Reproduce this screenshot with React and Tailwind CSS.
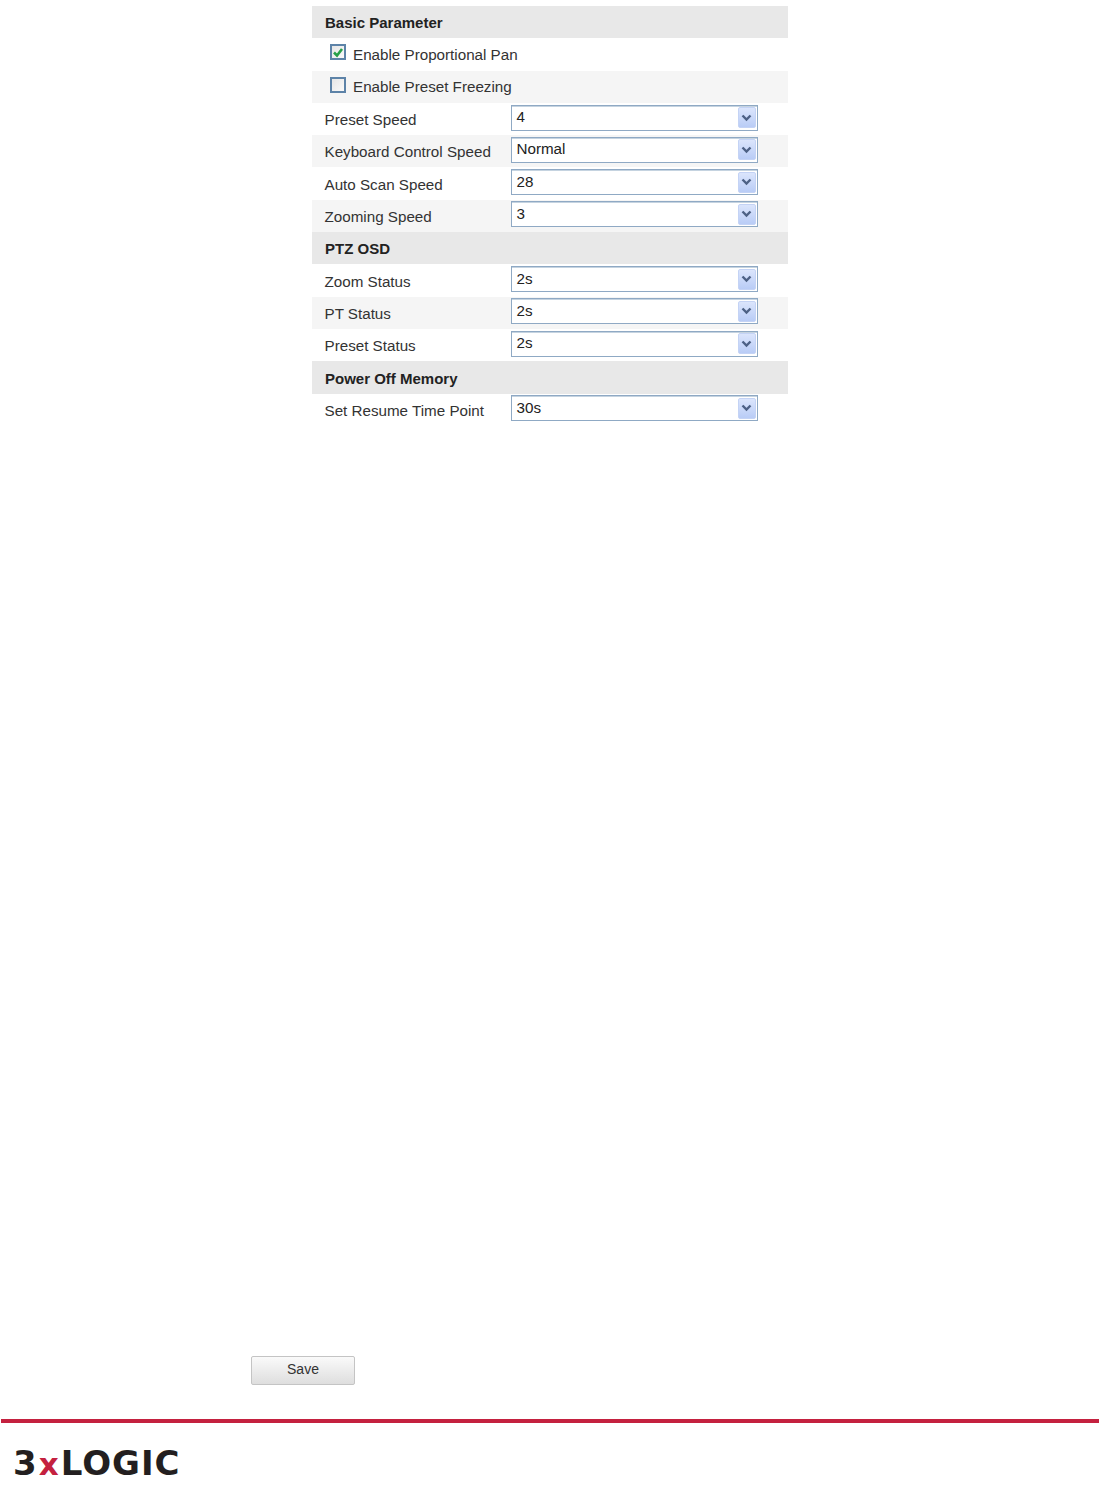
import React from "react";

function Select({ value }) {
  return (
    <div className="mb-[3px] flex h-[26px] w-[247px] items-center justify-between border border-[#8fa9c4] bg-white pl-[5px] pr-[1px] shadow-[inset_0_1px_0_#c5d3e0]">
      <span className="text-[15.2px] text-[#222]">{value}</span>
      <span className="flex h-[21px] w-[18px] items-center justify-center rounded-[2px] border border-[#c4d3f5] bg-gradient-to-b from-[#dbe5fc] to-[#b9ccf6]">
        <svg width="11" height="8" viewBox="0 0 11 8">
          <path d="M1.5 1.5 L5.5 5.5 L9.5 1.5" fill="none" stroke="#4d6185" strokeWidth="2.4" />
        </svg>
      </span>
    </div>
  );
}

function Header({ children }) {
  return (
    <div className="flex h-[32.3px] items-center bg-[#e8e8e8] pl-[13px] text-[15px] font-bold text-[#222]">
      <span className="relative top-[1.5px]">{children}</span>
    </div>
  );
}

function Row({ label, value, gray }) {
  return (
    <div className={"flex h-[32.3px] items-center pl-[12.5px] " + (gray ? "bg-[#f5f5f5]" : "bg-white")}>
      <span className="relative top-[1.5px] w-[186px] text-[15.2px] text-[#333]">{label}</span>
      <Select value={value} />
    </div>
  );
}

function Check({ label, checked, gray }) {
  return (
    <div className={"flex h-[32.3px] items-center pl-[18px] " + (gray ? "bg-[#f5f5f5]" : "bg-white")}>
      <span className="relative top-[-2px] flex h-[16px] w-[16px] items-center justify-center border-2 border-[#5d83a8] bg-gradient-to-br from-[#e6e6e6] to-[#fafafa]">
        {checked && (
          <svg width="12" height="11" viewBox="0 0 12 11">
            <path d="M2 5.5 L5 8.5 L10 2" fill="none" stroke="#27a048" strokeWidth="2.6" />
          </svg>
        )}
      </span>
      <span className="relative top-[1px] ml-[7px] text-[15.2px] text-[#333]">{label}</span>
    </div>
  );
}

export default function App() {
  return (
    <div className="flex h-[1500px] flex-col bg-white font-['Liberation_Sans',Arial,sans-serif]">
      <div className="ml-[312px] mt-[6px] w-[476px]">
        <Header>Basic Parameter</Header>
        <Check label="Enable Proportional Pan" checked />
        <Check label="Enable Preset Freezing" gray />
        <Row label="Preset Speed" value="4" />
        <Row label="Keyboard Control Speed" value="Normal" gray />
        <Row label="Auto Scan Speed" value="28" />
        <Row label="Zooming Speed" value="3" gray />
        <Header>PTZ OSD</Header>
        <Row label="Zoom Status" value="2s" />
        <Row label="PT Status" value="2s" gray />
        <Row label="Preset Status" value="2s" />
        <Header>Power Off Memory</Header>
        <Row label="Set Resume Time Point" value="30s" />
      </div>
      <button className="ml-[251px] mt-[930px] flex h-[29px] w-[104px] items-center justify-center rounded-[2px] border border-[#c4c4c4] bg-gradient-to-b from-[#fafafa] to-[#dedede] pb-[1px] text-[14px] text-[#333]">
        Save
      </button>
      <div className="ml-[1px] mt-[34.5px] h-[4px] bg-[#c4213f]" />
      <div className="ml-[13px] mt-[24px] flex h-[32px] items-baseline font-['DejaVu_Sans',sans-serif] text-[34px] font-black leading-[32px] text-[#231f20]">
        <span>3</span>
        <span className="ml-[2px] mr-[2px] text-[31px] text-[#c4213f]">x</span>
        <span className="tracking-[1px]">LOGIC</span>
      </div>
    </div>
  );
}
